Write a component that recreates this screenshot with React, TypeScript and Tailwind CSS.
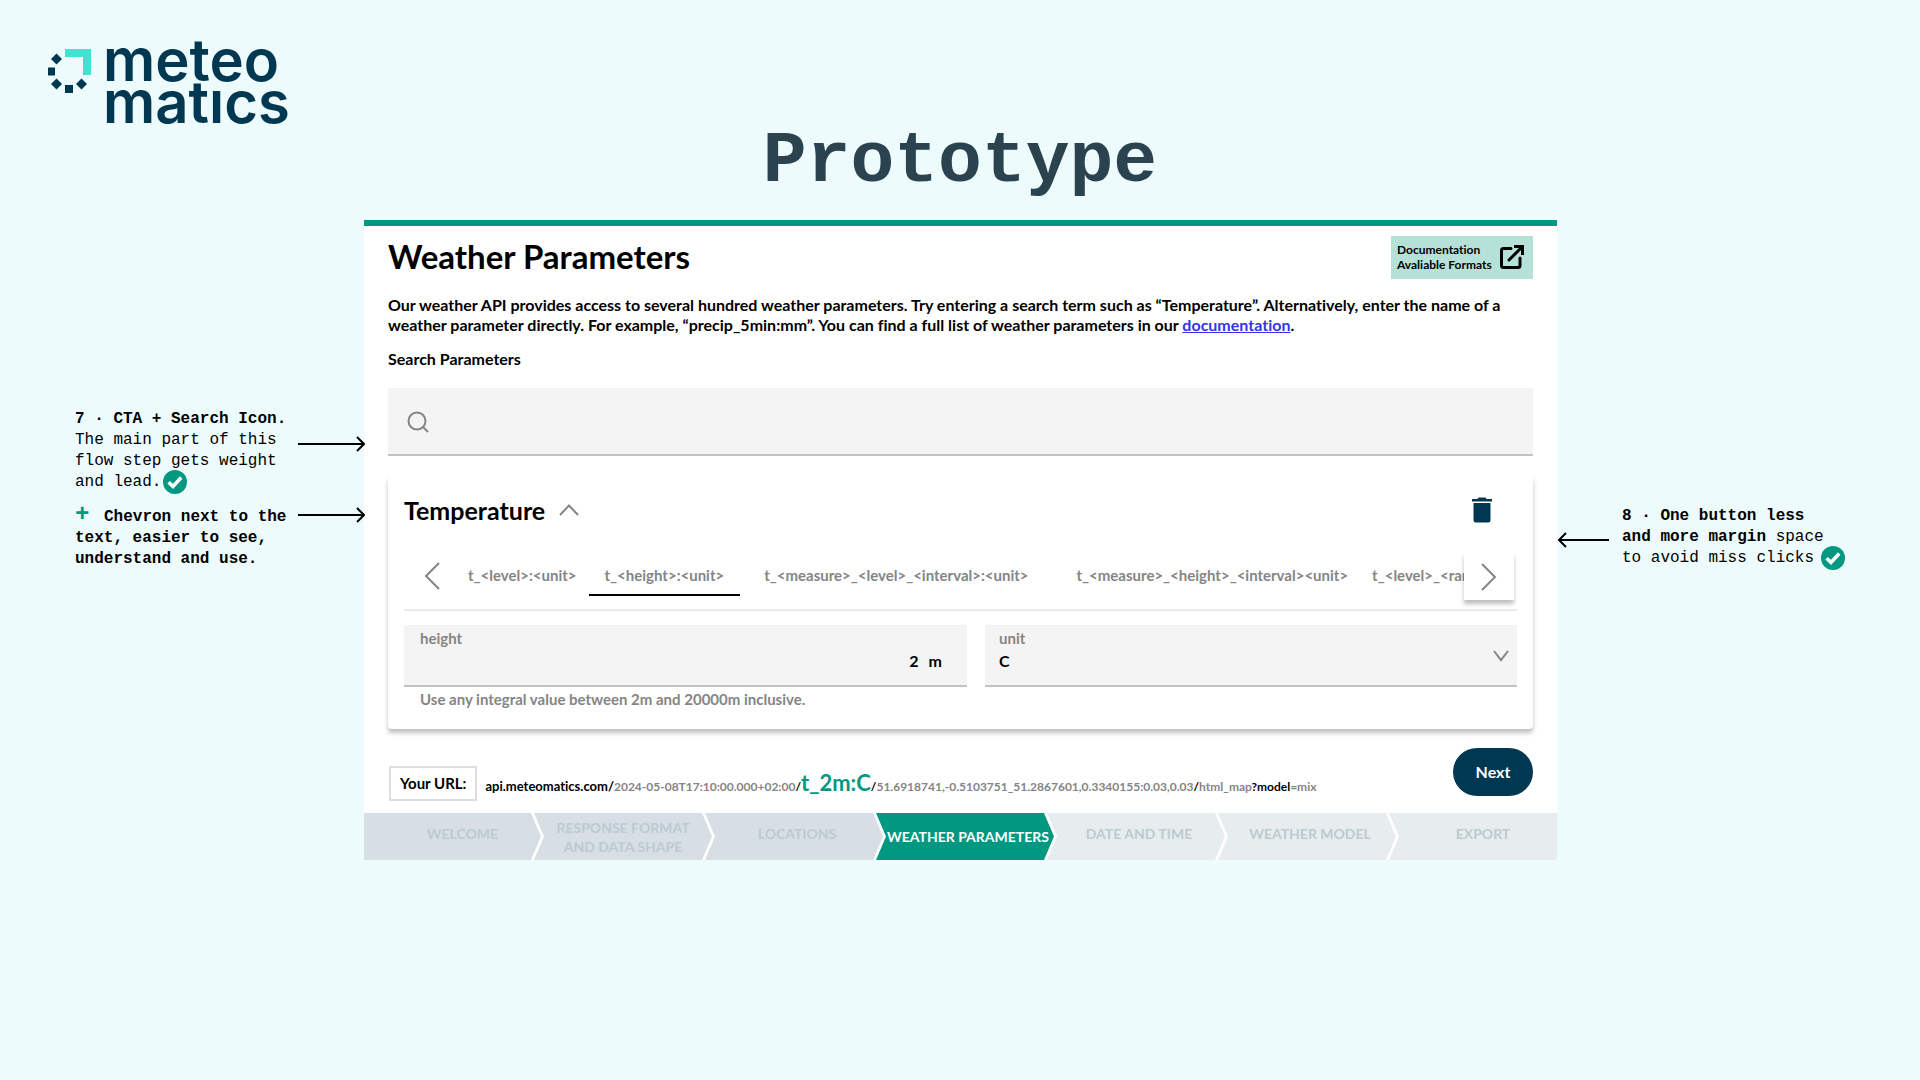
import type { ReactNode } from "react";

function CheckBadge({ className = "" }: { className?: string }) {
  return (
    <svg viewBox="0 0 24 24" role="img" aria-label="Done" className={`-my-1 inline-block size-6 align-middle ${className}`}>
      <circle cx="12" cy="12" r="12" fill="#019881" />
      <path d="M5.6 12.2 10 16.4 18.2 7.6" fill="none" stroke="#fff" strokeWidth="3.6" />
    </svg>
  );
}

function ArrowRight({ className = "" }: { className?: string }) {
  return (
    <svg viewBox="0 0 67 16" aria-hidden="true" className={`h-4 w-[67px] shrink-0 ${className}`}>
      <path d="M0 8H66M59 1l7 7-7 7" fill="none" stroke="#000" strokeWidth="2" />
    </svg>
  );
}

function ArrowLeft({ className = "" }: { className?: string }) {
  return (
    <svg viewBox="0 0 52 16" aria-hidden="true" className={`h-4 w-[52px] shrink-0 ${className}`}>
      <path d="M52 8H2M9 1 2 8l7 7" fill="none" stroke="#000" strokeWidth="2" />
    </svg>
  );
}

function Logo() {
  return (
    <div className="flex items-start gap-3 text-[#003852]" aria-label="meteomatics">
      <svg viewBox="0 0 43 44" aria-hidden="true" className="mt-[10px] h-11 w-[43px] shrink-0">
        <path d="M17 0H43V26H35V8H17Z" fill="#43e1d1" />
        <g fill="#003852">
          <rect x="0" y="18.5" width="7" height="8" />
          <rect x="17" y="36" width="8" height="8" />
          <path d="M8.500 4.500 14 10l-5.500 5.500L3 10Z" />
          <path d="M8.500 29.500 14 35l-5.500 5.500L3 35Z" />
          <path d="M33.500 29.500 39 35l-5.500 5.500L28 35Z" />
        </g>
      </svg>
      <p className="font-['Inter',sans-serif] text-[58px] leading-[42px] font-semibold">
        meteo
        <br />
        matıcs
      </p>
    </div>
  );
}

const tabs: { label: string; pad: string; active?: boolean }[] = [
  { label: "t_<level>:<unit>", pad: "pl-2 pr-3" },
  { label: "t_<height>:<unit>", pad: "px-4", active: true },
  { label: "t_<measure>_<level>_<interval>:<unit>", pad: "px-6" },
  { label: "t_<measure>_<height>_<interval><unit>", pad: "px-6" },
  { label: "t_<level>_<range>:<unit>", pad: "pr-6" },
];

function ParameterCard() {
  return (
    <section className="mt-[19px] rounded bg-white px-4 pt-5 pb-5 shadow-[0_4px_4px_rgba(0,0,0,0.25)]">
      <div className="flex items-center">
        <h3 className="text-[25px] leading-[30px] font-bold">Temperature</h3>
        <button type="button" aria-label="Collapse" className="ml-[14px]">
          <svg viewBox="0 0 20 12" aria-hidden="true" className="h-3 w-5">
            <path d="M1 11 10 1.500 19 11" fill="none" stroke="#858585" strokeWidth="2" />
          </svg>
        </button>
        <button type="button" aria-label="Delete parameter" className="mr-[25px] ml-auto">
          <svg viewBox="0 0 20 26" aria-hidden="true" className="h-[26px] w-5" fill="#003852">
            <path d="M0 2H5.500L6.500 .5H13.500L14.500 2H20V4.500H0Z" />
            <path d="M1.500 6H18.500V23a2.500 2.500 0 0 1-2.500 2.500H4A2.500 2.500 0 0 1 1.500 23Z" />
          </svg>
        </button>
      </div>

      <div className="mt-7 flex border-b-2 border-[#e9e9e9] pb-2">
        <button type="button" aria-label="Previous formats" className="flex h-[46px] w-14 shrink-0 items-center justify-center">
          <svg viewBox="0 0 16 28" aria-hidden="true" className="h-7 w-4">
            <path d="M15 1 2 14l13 13" fill="none" stroke="#858585" strokeWidth="2" />
          </svg>
        </button>
        <div role="tablist" className="flex h-12 min-w-0 flex-1 items-start overflow-hidden">
          {tabs.map((t) => (
            <button
              key={t.label}
              type="button"
              role="tab"
              aria-selected={!!t.active}
              className={`shrink-0 border-b-2 pt-3 pb-[9px] text-[15px] leading-5 font-bold whitespace-nowrap text-[#858585] ${t.pad} ${
                t.active ? "border-black" : "border-transparent"
              }`}
            >
              {t.label}
            </button>
          ))}
        </div>
        <button
          type="button"
          aria-label="Next formats"
          className="mr-[3px] flex h-[47px] w-[50px] shrink-0 items-center justify-center bg-white shadow-[0_4px_4px_rgba(0,0,0,0.25)]"
        >
          <svg viewBox="0 0 16 28" aria-hidden="true" className="h-7 w-4">
            <path d="M1 1l13 13L1 27" fill="none" stroke="#858585" strokeWidth="2" />
          </svg>
        </button>
      </div>

      <div className="mt-[14px] grid grid-cols-[563fr_532fr] gap-x-[18px]">
        <div>
          <div className="border-b-2 border-[#c2c2c2] bg-[#f4f4f4] px-4 pt-[3px] pb-[14px]">
            <label htmlFor="height" className="block text-[15px] leading-5 font-bold text-[#858585]">
              height
            </label>
            <div className="mt-[3px] flex gap-[10px] pr-[9px] text-base leading-5 font-bold">
              <input id="height" defaultValue="2" className="h-5 min-w-0 flex-1 bg-transparent text-right outline-none" />
              <span>m</span>
            </div>
          </div>
          <p className="mt-[3px] px-4 text-[15px] leading-[19px] font-bold text-[#858585]">
            Use any integral value between 2m and 20000m inclusive.
          </p>
        </div>
        <div>
          <div className="relative border-b-2 border-[#c2c2c2] bg-[#f4f4f4] px-[14px] pt-[3px] pb-[14px]">
            <label htmlFor="unit" className="block text-[15px] leading-5 font-bold text-[#858585]">
              unit
            </label>
            <select id="unit" className="mt-[3px] block h-5 w-full appearance-none bg-transparent text-base leading-5 font-bold outline-none">
              <option>C</option>
            </select>
            <svg viewBox="0 0 16 12" aria-hidden="true" className="pointer-events-none absolute top-[25px] right-2 h-3 w-4">
              <path d="M1 1l7 9 7-9" fill="none" stroke="#858585" strokeWidth="2" />
            </svg>
          </div>
        </div>
      </div>
    </section>
  );
}

function UrlBar() {
  return (
    <div className="mt-[19px] flex items-start pb-3">
      <p className="mt-[18px] ml-px border-2 border-[#dedede] px-[9px] py-[5px] text-[15px] leading-[21px] font-bold whitespace-nowrap">
        Your URL:
      </p>
      <p className="mt-[21px] ml-2 text-xs leading-7 font-bold whitespace-nowrap text-[#858585]">
        <span className="text-[13px] text-black">api.meteomatics.com/</span>2024-05-08T17:10:00.000+02:00
        <span className="text-black">/</span>
        <span className="text-[22px] text-[#019881]">t_2m:C</span>
        <span className="text-black">/</span>51.6918741,-0.5103751_51.2867601,0.3340155:0.03,0.03
        <span className="text-black">/</span>html_map<span className="text-black">?model</span>=mix
      </p>
      <button type="button" className="ml-auto h-12 w-20 rounded-full bg-[#003852] text-base font-bold text-white">
        Next
      </button>
    </div>
  );
}

const steps: { label: ReactNode; look: string }[] = [
  { label: "WELCOME", look: "bg-[#d7dfe5] text-[#bccad1] pb-1.5 pl-5 [clip-path:polygon(0_0,calc(100%-10px)_0,100%_50%,calc(100%-10px)_100%,0_100%)]" },
  { label: <>RESPONSE FORMAT<br />AND DATA SHAPE</>, look: "bg-[#d7dfe5] text-[#bccad1]" },
  { label: "LOCATIONS", look: "bg-[#d7dfe5] text-[#bccad1] pb-1.5 pl-1.5" },
  { label: "WEATHER PARAMETERS", look: "bg-[#019881] text-white pl-1.5" },
  { label: "DATE AND TIME", look: "bg-[#e7edef] text-[#bccad1] pb-1.5 pl-1.5" },
  { label: "WEATHER MODEL", look: "bg-[#e7edef] text-[#bccad1] pb-1.5 pl-1.5" },
  { label: "EXPORT", look: "bg-[#e7edef] text-[#bccad1] pb-1.5 pl-5 [clip-path:polygon(0_0,100%_0,100%_100%,0_100%,10px_50%)]" },
];

const chevronShape =
  "[clip-path:polygon(0_0,calc(100%-10px)_0,100%_50%,calc(100%-10px)_100%,0_100%,10px_50%)]";

function Steps() {
  return (
    <nav aria-label="Steps">
      <ol className="grid grid-cols-[170fr_171fr_171fr_171fr_171fr_171fr_168fr]">
        {steps.map((s, i) => {
          const middle = i > 0 && i < steps.length - 1;
          return (
            <li key={i} className={i < steps.length - 1 ? "-mr-[7px]" : ""}>
              <button
                type="button"
                aria-current={i === 3 ? "step" : undefined}
                className={`flex h-[47px] w-full items-center justify-center text-center text-[14px] leading-[19px] font-bold whitespace-nowrap ${s.look} ${
                  middle ? chevronShape : ""
                }`}
              >
                <span>{s.label}</span>
              </button>
            </li>
          );
        })}
      </ol>
    </nav>
  );
}

export default function App() {
  return (
    <div className="min-h-screen bg-[#edfbfc] font-['Liberation_Mono',monospace] text-black">
      <header className="pt-[39px] pl-12">
        <Logo />
      </header>
      <h1 className="text-center text-[73px] leading-[78px] font-bold text-[#2b434e]">Prototype</h1>

      <main className="mt-[19px] grid grid-cols-[364fr_1193fr_363fr]">
        <aside className="relative z-10 min-w-0 pt-[189px] pl-[75px] text-base leading-[21px]">
          <div className="flex items-start gap-[11px]">
            <p className="w-[212px] shrink-0">
              <strong className="whitespace-nowrap">7 · CTA + Search Icon.</strong>
              <br />
              The main part of this
              <br />
              flow step gets weight
              <br />
              and lead.
              <CheckBadge className="ml-0.5" />
            </p>
            <ArrowRight className="mt-[27px]" />
          </div>
          <div className="mt-[14px] flex items-start gap-[11px]">
            <p className="w-[212px] shrink-0 font-bold">
              <span className="inline-block w-[29px] text-2xl leading-4 text-[#019881]">+</span>
              Chevron next to the
              <br />
              text, easier to see,
              <br />
              understand and use.
            </p>
            <ArrowRight />
          </div>
        </aside>

        <div className="flex min-w-0 flex-col border-t-[6px] border-[#019881] bg-white font-['Lato',sans-serif] [font-variant-ligatures:none]">
          <div className="px-6 pt-[10px]">
            <div className="flex items-start justify-between">
              <h2 className="text-[33px] leading-10 font-bold">Weather Parameters</h2>
              <a href="#docs" className="flex h-[43px] w-[142px] items-center justify-between bg-[#b6e1d8] pr-2 pb-0.5 pl-1.5 text-xs leading-[15px] font-bold">
                <span className="whitespace-nowrap">
                  Documentation
                  <br />
                  Avaliable Formats
                </span>
                <svg viewBox="0 0 26 26" aria-hidden="true" className="size-[26px] shrink-0">
                  <g fill="none" stroke="#000" strokeWidth="3">
                    <path d="M12 4.500H4.500a2 2 0 0 0-2 2V21.500a2 2 0 0 0 2 2H19a2 2 0 0 0 2-2V14" strokeLinecap="round" />
                    <path d="M10 16 23 3" strokeLinecap="round" />
                    <path d="M15 2.500H23.500V11" />
                  </g>
                </svg>
              </a>
            </div>
            <p className="mt-4 text-base leading-5 font-bold">
              Our weather API provides access to several hundred weather parameters. Try entering a search term such as “Temperature”.
              Alternatively, enter the name of a weather parameter directly. For example, “precip_5min:mm”. You can find a full list of
              weather parameters in our{" "}
              <a href="#documentation" className="text-[#3333ee] underline">
                documentation
              </a>
              .
            </p>
            <label htmlFor="search" className="mt-[14px] block text-base leading-5 font-bold">
              Search Parameters
            </label>
            <div className="mt-[19px] flex h-[68px] items-center border-b-2 border-[#c2c2c2] bg-[#f4f4f4] px-[19px] pt-0.5">
              <svg viewBox="0 0 22 22" aria-hidden="true" className="size-[22px] shrink-0">
                <circle cx="10" cy="10" r="8.500" fill="none" stroke="#858585" strokeWidth="2" />
                <path d="M16 16l5 5" stroke="#858585" strokeWidth="2" />
              </svg>
              <input id="search" type="text" className="ml-3 h-full min-w-0 flex-1 bg-transparent outline-none" />
            </div>
            <ParameterCard />
            <UrlBar />
          </div>
          <Steps />
        </div>

        <aside className="flex min-w-0 items-start gap-[13px] pt-[286px] text-base leading-[21px]">
          <ArrowLeft className="mt-[26px]" />
          <p className="whitespace-nowrap">
            <strong>8 · One button less</strong>
            <br />
            <strong>and more margin</strong> space
            <br />
            to avoid miss clicks
            <CheckBadge className="ml-[7px]" />
          </p>
        </aside>
      </main>
    </div>
  );
}
